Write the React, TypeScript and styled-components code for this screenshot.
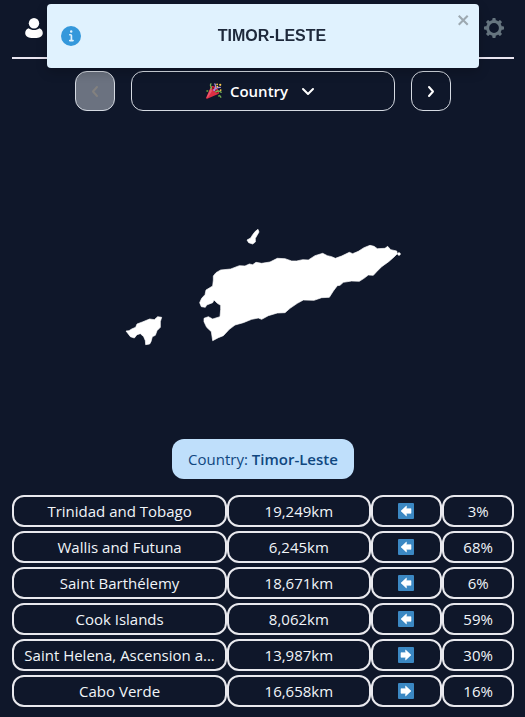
import React from "react";
import styled, { createGlobalStyle } from "styled-components";

const GlobalStyle = createGlobalStyle`
  *, *::before, *::after { box-sizing: border-box; }
  body {
    margin: 0;
    background: #0f172a;
    color: #f1f5f9;
    font: 400 15px/24px "Open Sans", "Noto Sans", sans-serif;
  }
  button { font: inherit; color: inherit; cursor: pointer; }
  svg { display: block; }
`;

const Page = styled.div`
  display: flex;
  flex-direction: column;
  padding: 0 11px 10px 12px;
`;

const Header = styled.header`
  display: flex;
  align-items: center;
  justify-content: space-between;
  padding: 18px 10px 19px 12px;
  border-bottom: 2px solid #e9e5f0;
`;

const IconButton = styled.button`
  display: flex;
  padding: 0;
  border: 0;
  background: none;
`;

const Toast = styled.div`
  position: fixed;
  z-index: 10;
  top: 4px;
  left: 47px;
  right: 46px;
  display: flex;
  align-items: center;
  min-height: 64px;
  padding: 8px 8px 8px 14px;
  border-radius: 4px;
  background: #e0f2fe;
  color: #1e293b;
  box-shadow: 0 4px 12px rgba(0, 0, 0, 0.2);
`;

const ToastText = styled.p`
  flex: 1;
  margin: 0;
  padding-left: 8px;
  text-align: center;
  font: 700 16px/24px "Liberation Sans", sans-serif;
`;

const ToastClose = styled(IconButton)`
  align-self: flex-start;
  color: #9da9b1;
`;

const Controls = styled.nav`
  display: flex;
  justify-content: center;
  gap: 16px;
  margin-top: 12px;
`;

const ControlButton = styled.button<{ $wide?: boolean }>`
  display: flex;
  align-items: center;
  justify-content: center;
  flex: 0 1 ${(p) => (p.$wide ? "264px" : "40px")};
  height: 40px;
  padding: 0 ${(p) => (p.$wide ? "4px" : "0")} 0 0;
  gap: 8px;
  border: 1px solid #d5dae2;
  border-radius: 12px;
  background: #0f172a;
  color: #fff;
  font-weight: 600;

  &:disabled {
    background: #6b7280;
    color: #83817f;
    cursor: default;
  }
`;

const ButtonLabel = styled.span`
  padding-right: 4px;
`;

const CountryMap = styled.svg`
  width: 100%;
  height: auto;
  fill: #fff;
  stroke: #fff;
  stroke-width: 2;
  stroke-linejoin: round;
`;

const Answer = styled.p`
  align-self: center;
  margin: 0;
  padding: 8px 16px;
  border-radius: 12px;
  background: #bfdffb;
  color: #10477f;
  strong { font-weight: 600; }
`;

const Guesses = styled.table`
  width: 100%;
  margin: 12px 0 -4px;
  table-layout: fixed;
  border-collapse: separate;
  border-spacing: 0 4px;
`;

const Column = styled.col<{ $share: number }>`
  width: calc(100% * ${(p) => p.$share} / 7);
`;

const Cell = styled.td`
  height: 32px;
  padding: 2px 8px;
  border: 2px solid #e9e9ee;
  border-radius: 12px;
  overflow: hidden;
  text-align: center;
  text-overflow: ellipsis;
  white-space: nowrap;
`;

const ArrowIcon = styled.svg`
  margin: 0 auto;
`;

type Direction = "left" | "right";
const guesses: { name: string; distance: string; direction: Direction; score: string }[] = [
  { name: "Trinidad and Tobago", distance: "19,249km", direction: "left", score: "3%" },
  { name: "Wallis and Futuna", distance: "6,245km", direction: "left", score: "68%" },
  { name: "Saint Barthélemy", distance: "18,671km", direction: "left", score: "6%" },
  { name: "Cook Islands", distance: "8,062km", direction: "left", score: "59%" },
  { name: "Saint Helena, Ascension a...", distance: "13,987km", direction: "right", score: "30%" },
  { name: "Cabo Verde", distance: "16,658km", direction: "right", score: "16%" },
];

const UserIcon = () => (
  <svg width="20" height="20" viewBox="0 0 20 20" fill="#fff" aria-hidden="true">
    <circle cx="10" cy="5.2" r="5.2" />
    <path d="M4.6 10.2C6 11.3 8 12 10 12s4-.7 5.4-1.8c2.1.7 3.4 2.7 3.4 4.7 0 3.6-4 5.3-8.8 5.3s-8.8-1.7-8.8-5.3c0-2 1.3-4 3.4-4.7Z" />
  </svg>
);

const GearIcon = () => (
  <svg width="20" height="20" viewBox="0 0 20 20" aria-hidden="true">
    <g fill="#66757f">
      {[0, 45, 90, 135].map((a) => (
        <path key={a} transform={`rotate(${a} 10 10)`} d="M8.3 1q0-1 1-1h1.4q1 0 1 1v4H8.3Zm0 18q0 1 1 1h1.4q1 0 1-1v-4H8.3Z" />
      ))}
    </g>
    <circle cx="10" cy="10" r="6.4" fill="#0f172a" stroke="#66757f" strokeWidth="3" />
  </svg>
);

const InfoIcon = () => (
  <svg width="20" height="20" viewBox="0 0 24 24" fill="#3498db" aria-hidden="true">
    <path d="M12 0a12 12 0 1 0 12 12A12.013 12.013 0 0 0 12 0zm.25 5a1.5 1.5 0 1 1-1.5 1.5 1.5 1.5 0 0 1 1.5-1.5zm2.25 13.5h-4a1 1 0 0 1 0-2h.75a.25.25 0 0 0 .25-.25v-4.5a.25.25 0 0 0-.25-.25h-.75a1 1 0 0 1 0-2h1a2 2 0 0 1 2 2v4.75a.25.25 0 0 0 .25.25h.75a1 1 0 1 1 0 2z" />
  </svg>
);

const CloseIcon = () => (
  <svg width="16" height="16" viewBox="-1 0 14 16" fill="currentColor" aria-hidden="true">
    <path fillRule="evenodd" d="M7.71 8.23l3.75 3.75-1.48 1.48-3.75-3.75-3.75 3.75L1 11.98l3.75-3.75L1 4.48 2.48 3l3.75 3.75L9.98 3l1.48 1.48-3.75 3.75z" />
  </svg>
);

const Chevron = ({ d }: { d: string }) => (
  <svg width="16" height="16" viewBox="0 0 16 16" fill="none" stroke="currentColor" strokeWidth="2" strokeLinecap="round" strokeLinejoin="round" aria-hidden="true">
    <path d={d} />
  </svg>
);

const PartyIcon = () => (
  <svg width="16" height="16" viewBox="0 0 36 36" aria-hidden="true">
    <path fill="#dd2e44" d="M11.6 7.6c-.5.5-.9 1.3-1.1 2L.2 33.1c-.5 1.5 1 3 2.5 2.5l23.5-10.3c.8-.2 1.5-.6 2-1.1 2.4-2.4.6-8-4-12.6s-10.2-6.4-12.6-4Z" />
    <path fill="#ea596e" d="m10.5 11 3 7-9 14L1 34Z" />
    <ellipse cx="20" cy="16" rx="9" ry="3" transform="rotate(45 20 16)" fill="#a0041e" />
    <path fill="none" stroke="#aa8dd8" strokeWidth="3" strokeLinecap="round" d="M17 16c5-3 6-8 3-14M19 17c1-6 5-7 13-7" />
    <path fill="none" stroke="#77b255" strokeWidth="3" strokeLinecap="round" d="M11 13c5-2-4-5 0-11M22 20c4-3 9-2 12 1" />
    <path fill="none" stroke="#77b255" strokeWidth="3" d="m30 27 4 6" />
    <g fill="#ffcc4d">
      <circle cx="25.5" cy="8" r="2" /><circle cx="32" cy="4" r="2.5" /><circle cx="33" cy="16" r="2" /><circle cx="25" cy="3" r="2" />
    </g>
    <g fill="#5c913b"><circle cx="3" cy="18" r="2.5" /><circle cx="29" cy="29" r="2" /></g>
  </svg>
);

const arrowPaths: Record<Direction, string> = {
  left: "M3 8 8.4 3v2.700H13v4.600H8.400V13Z",
  right: "M13 8 7.6 3v2.700H3v4.600h4.600V13Z",
};

const DirectionArrow = ({ direction }: { direction: Direction }) => (
  <ArrowIcon width="16" height="16" viewBox="0 0 16 16" role="img" aria-label={direction}>
    <rect width="16" height="16" rx="1" fill="#3b88c3" />
    <path fill="#fff" stroke="#fff" strokeWidth=".6" strokeLinejoin="round" d={arrowPaths[direction]} />
  </ArrowIcon>
);

export default function App() {
  return (
    <>
      <GlobalStyle />
      <Toast role="alert">
        <InfoIcon />
        <ToastText>TIMOR-LESTE</ToastText>
        <ToastClose type="button" aria-label="Close">
          <CloseIcon />
        </ToastClose>
      </Toast>
      <Page>
        <Header>
          <IconButton type="button" aria-label="Profile"><UserIcon /></IconButton>
          <IconButton type="button" aria-label="Settings"><GearIcon /></IconButton>
        </Header>
        <Controls aria-label="Rounds">
          <ControlButton type="button" disabled aria-label="Previous round">
            <Chevron d="M10 4 6 8.500l4 4.500" />
          </ControlButton>
          <ControlButton type="button" $wide aria-haspopup="listbox">
            <PartyIcon />
            <ButtonLabel>Country</ButtonLabel>
            <Chevron d="m3 6 5 5 5-5" />
          </ControlButton>
          <ControlButton type="button" aria-label="Next round">
            <Chevron d="m6 4 4 4.500-4 4.500" />
          </ControlButton>
        </Controls>
        <CountryMap viewBox="-309 -327 1506 984" role="img" aria-label="Country outline">
          <path d="M33 333 42 332 50 327 62 322 66 312 82 306 104 297 118 299 128 290 140 292 136 305 136 322 126 332 121 346 112 350 108 365 104 372 92 374 91 362 86 350 76 341 66 344 58 354 46 350 40 342Z" />
          <path d="M429 28 432 36 421 55 421 66 413 72 401 68 396 60 407 54 413 44 421 34Z" />
          <path d="M303 158 317 150 347 147 373 137 390 138 403 132 413 134 423 127 440 130 465 126 487 115 510 116 530 123 545 123 563 119 580 120 600 107 623 100 637 107 650 110 661 115 680 108 703 97 713 101 730 94 747 83 765 76 777 79 787 86 810 85 818 79 827 89 845 93 847 101 837 111 821 125 800 140 785 155 775 166 760 165 747 175 733 184 710 183 685 187 675 196 667 197 655 213 643 232 620 233 597 241 565 240 547 250 525 265 510 278 487 279 460 287 440 298 430 294 410 298 385 308 360 315 343 328 325 347 310 353 293 362 289 335 275 322 267 305 267 295 280 290 293 297 315 290 317 268 317 256 307 250 297 240 293 248 275 255 271 262 259 260 254 248 260 235 270 224 273 210 293 198 295 180 295 168Z" />
          <circle cx="852" cy="102" r="4" />
        </CountryMap>
        <Answer>Country: <strong>Timor-Leste</strong></Answer>
        <Guesses aria-label="Guesses">
          <colgroup>
            <Column $share={3} /><Column $share={2} /><Column $share={1} /><Column $share={1} />
          </colgroup>
          <tbody>
            {guesses.map((g) => (
              <tr key={g.name}>
                <Cell>{g.name}</Cell>
                <Cell>{g.distance}</Cell>
                <Cell><DirectionArrow direction={g.direction} /></Cell>
                <Cell>{g.score}</Cell>
              </tr>
            ))}
          </tbody>
        </Guesses>
      </Page>
    </>
  );
}
